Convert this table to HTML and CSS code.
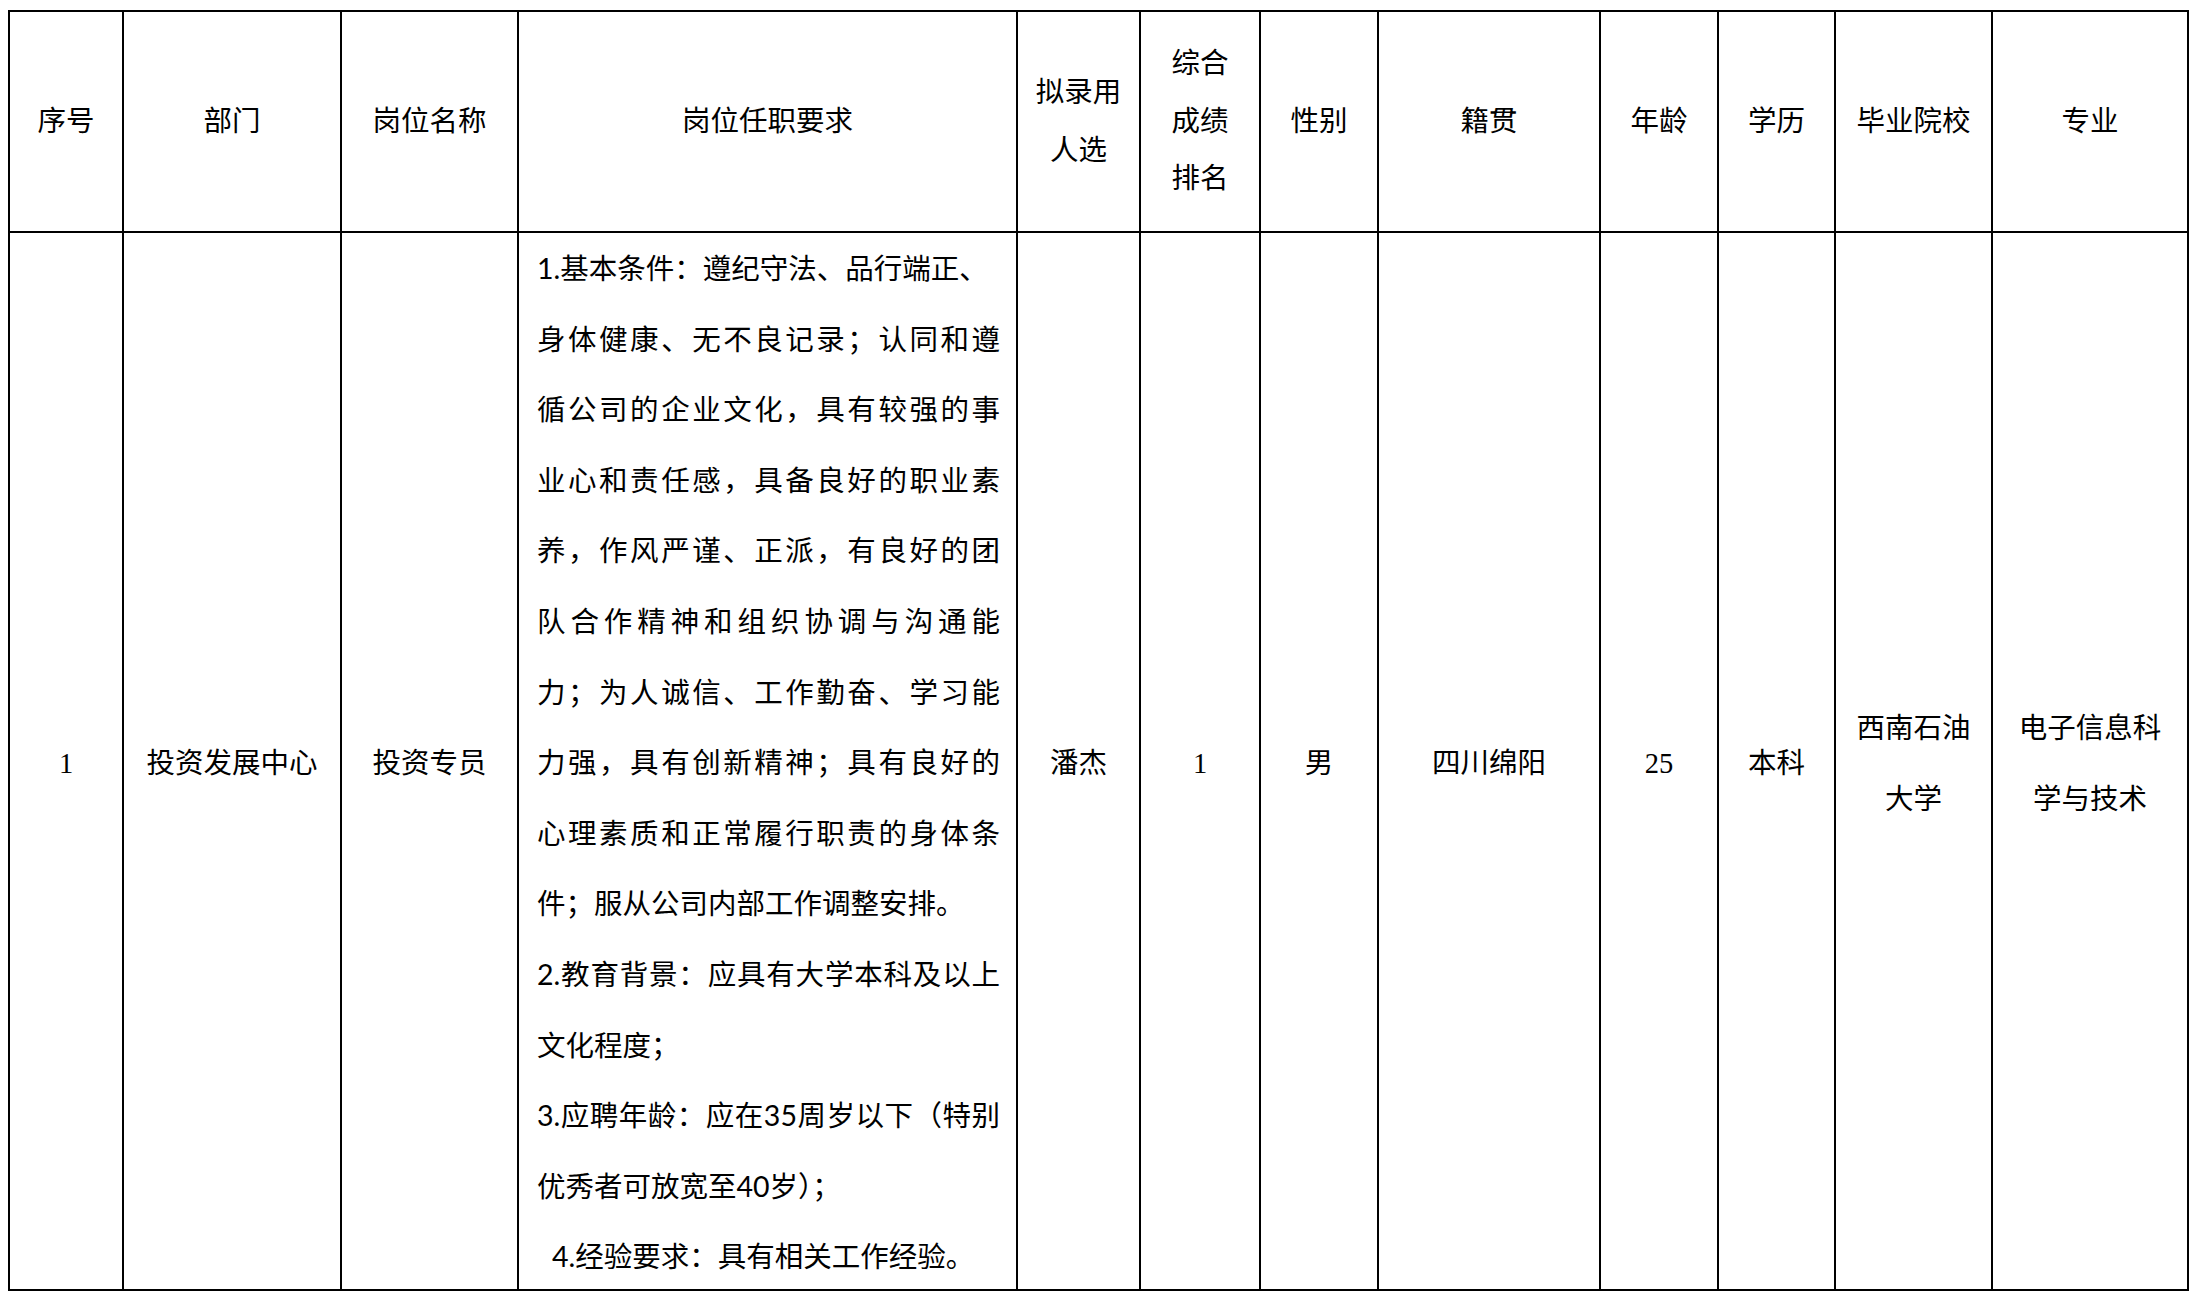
FILE: index.html
```html
<!DOCTYPE html>
<html lang="zh-CN">
<head>
<meta charset="utf-8">
<title>拟录用人选</title>
<link rel="stylesheet" href="styles.css">
</head>
<body>
<div class="sheet">
  <div class="cell head">序号</div>
  <div class="cell head">部门</div>
  <div class="cell head">岗位名称</div>
  <div class="cell head">岗位任职要求</div>
  <div class="cell head">拟录用<br>人选</div>
  <div class="cell head">综合<br>成绩<br>排名</div>
  <div class="cell head">性别</div>
  <div class="cell head">籍贯</div>
  <div class="cell head">年龄</div>
  <div class="cell head">学历</div>
  <div class="cell head">毕业院校</div>
  <div class="cell head">专业</div>

  <div class="cell body">1</div>
  <div class="cell body">投资发展中心</div>
  <div class="cell body">投资专员</div>
  <div class="cell req">
    <div class="ln full first">1.基本条件：遵纪守法、品行端正、</div>
    <div class="ln full">身体健康、无不良记录；认同和遵</div>
    <div class="ln full">循公司的企业文化，具有较强的事</div>
    <div class="ln full">业心和责任感，具备良好的职业素</div>
    <div class="ln full">养，作风严谨、正派，有良好的团</div>
    <div class="ln full">队合作精神和组织协调与沟通能</div>
    <div class="ln full">力；为人诚信、工作勤奋、学习能</div>
    <div class="ln full">力强，具有创新精神；具有良好的</div>
    <div class="ln full">心理素质和正常履行职责的身体条</div>
    <div class="ln">件；服从公司内部工作调整安排。</div>
    <div class="ln full">2.教育背景：应具有大学本科及以上</div>
    <div class="ln">文化程度；</div>
    <div class="ln full">3.应聘年龄：应在35周岁以下（特别</div>
    <div class="ln">优秀者可放宽至40岁）；</div>
    <div class="ln indent">4.经验要求：具有相关工作经验。</div>
  </div>
  <div class="cell body">潘杰</div>
  <div class="cell body">1</div>
  <div class="cell body">男</div>
  <div class="cell body">四川绵阳</div>
  <div class="cell body">25</div>
  <div class="cell body">本科</div>
  <div class="cell body">西南石油<br>大学</div>
  <div class="cell body">电子信息科<br>学与技术</div>
</div>
</body>
</html>
```

FILE: styles.css
```css
html, body {
  margin: 0;
  padding: 0;
  background: #ffffff;
}

body {
  color: #000000;
  font-family: "Liberation Serif", "Noto Sans CJK SC", serif;
  font-size: 28.5px;
}

.sheet {
  display: grid;
  grid-template-columns: 112px 216px 175px 497px 121px 118px 116px 220px 116px 115px 155px 194px;
  grid-template-rows: 219px 1056px;
  gap: 2px;
  padding: 2px;
  background: #000000;
  width: max-content;
  margin: 10px 0 0 8px;
}

.cell {
  background: #ffffff;
  display: flex;
  align-items: center;
  justify-content: center;
  text-align: center;
}

.head {
  line-height: 57.5px;
}

.body {
  line-height: 70.4px;
  padding-top: 7px;
}

.req {
  display: block;
  text-align: left;
  padding: 0 16px 0 18px;
  font-family: Lato, "Noto Sans CJK SC", sans-serif;
  line-height: 70.6px;
}

.ln {
  white-space: nowrap;
  text-align: left;
}

.ln.full {
  text-align: justify;
  text-align-last: justify;
}

.ln.first {
  margin-right: 17px;
}

.ln.indent {
  padding-left: 15px;
}
```
